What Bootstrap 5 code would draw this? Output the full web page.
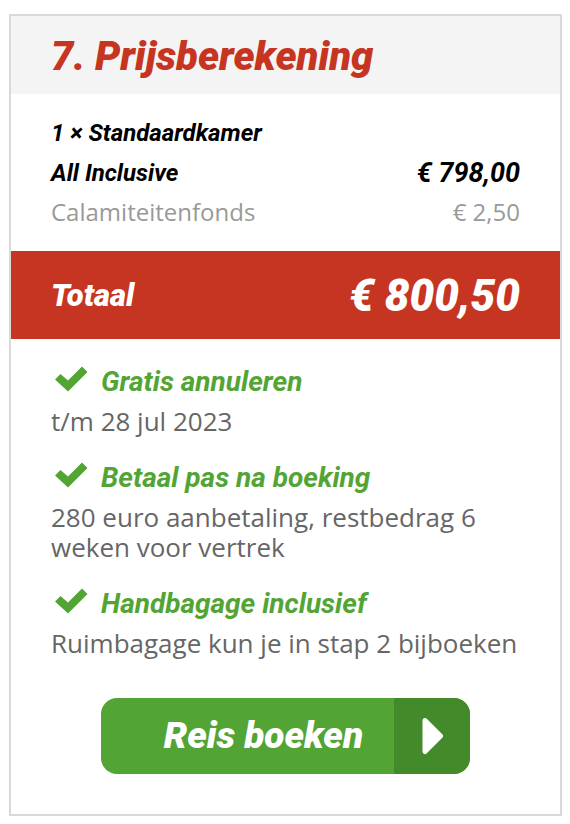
<!DOCTYPE html>
<html lang="nl">
<head>
<meta charset="utf-8">
<meta name="viewport" content="width=device-width, initial-scale=1">
<title>Prijsberekening</title>
<link href="https://cdn.jsdelivr.net/npm/bootstrap@5.3.0/dist/css/bootstrap.min.css" rel="stylesheet">
<style>
body{font-family:"Open Sans",sans-serif;font-size:26px;line-height:30px;color:#666;background:#fff}
.price-card{border:2px solid #d9d9d9;margin:14px 8px 8px 9px;padding-bottom:40px}
.display-face{font-family:Roboto,sans-serif;font-style:italic;font-weight:700}
.heavy-face{font-weight:900}
.price-head{background:#f4f4f4;padding:17px 40px 13px}
.price-head h1{font-size:40px;line-height:48px;color:#c63521}
.price-lines{padding:19px 40px 18px}
.price-row{line-height:40px;font-size:24px}
.price-row.display-face{color:#000}
.price-row .price{font-size:27px}
.price-row.fund{line-height:38px;padding-bottom:2px;color:#999}
.total{background:#c63521;color:#fff;height:88px;padding:2px 40px 0;font-size:31px}
.total .amount{font-size:44px}
.perks{padding:23px 40px 0}
.perk{margin-bottom:22px}
.perk h2{font-size:28px;line-height:40px;color:#52a535;gap:12px;margin-bottom:4px}
.perk h2 svg{width:38px;height:32px}
.book-row{padding-top:18px}
.book{width:369px;max-width:100%;height:76px;border-radius:16px;background:#52a535;color:#fff;font-size:37px}
.book-label{padding-left:32px}
.book-arrow{width:76px;background:#438a2a}
</style>
<script src="https://cdn.jsdelivr.net/npm/bootstrap@5.3.0/dist/js/bootstrap.bundle.min.js"></script>
</head>
<body>
<main class="price-card">
<header class="price-head"><h1 class="display-face heavy-face m-0">7. Prijsberekening</h1></header>
<section class="price-lines">
<div class="price-row display-face">1 × Standaardkamer</div>
<div class="price-row display-face d-flex justify-content-between"><span>All Inclusive</span><span class="price">€ 798,00</span></div>
<div class="price-row fund d-flex justify-content-between"><span>Calamiteitenfonds</span><span>€ 2,50</span></div>
</section>
<div class="total display-face heavy-face d-flex align-items-center justify-content-between"><span>Totaal</span><span class="amount">€ 800,50</span></div>
<section class="perks">
<div class="perk"><h2 class="display-face d-flex align-items-center"><svg viewBox="0 0 38 32" aria-hidden="true"><path d="M4 13.500l5.500-5.500 7.500 6.500L31 .5l5.500 5.500L17 25.500z" fill="currentColor"/></svg>Gratis annuleren</h2><p class="m-0">t/m 28 jul 2023</p></div>
<div class="perk"><h2 class="display-face d-flex align-items-center"><svg viewBox="0 0 38 32" aria-hidden="true"><path d="M4 13.500l5.500-5.500 7.500 6.500L31 .5l5.500 5.500L17 25.500z" fill="currentColor"/></svg>Betaal pas na boeking</h2><p class="m-0">280 euro aanbetaling, restbedrag 6 weken voor vertrek</p></div>
<div class="perk"><h2 class="display-face d-flex align-items-center"><svg viewBox="0 0 38 32" aria-hidden="true"><path d="M4 13.500l5.500-5.500 7.500 6.500L31 .5l5.500 5.500L17 25.500z" fill="currentColor"/></svg>Handbagage inclusief</h2><p class="m-0">Ruimbagage kun je in stap 2 bijboeken</p></div>
</section>
<div class="book-row d-flex justify-content-center"><button type="button" class="book display-face heavy-face border-0 p-0 d-flex overflow-hidden align-items-stretch"><span class="book-label flex-grow-1 align-self-center">Reis boeken</span><span class="book-arrow d-flex align-items-center justify-content-center"><svg width="22" height="38" viewBox="0 0 22 38" aria-hidden="true"><path d="M4 3.500L19.500 19 4 34.500z" fill="#fff" stroke="#fff" stroke-width="5" stroke-linejoin="round"/></svg></span></button></div>
</main>
</body>
</html>
